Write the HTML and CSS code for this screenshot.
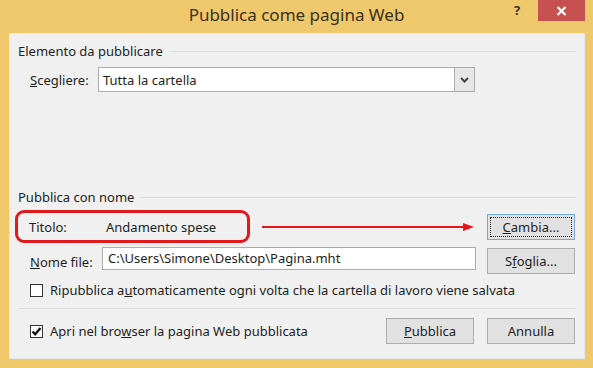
FILE: index.html
```html
<!DOCTYPE html>
<html lang="it">
<head>
    <meta charset="UTF-8">
    <title>Pubblica come pagina Web</title>
    <link rel="stylesheet" href="styles.css">
</head>
<body>
<div class="window">
    <div class="titlebar">
        <span></span>
        <div class="title">Pubblica come pagina Web</div>
        <div class="controls">
            <span class="help">?</span>
            <span class="close">
                <svg width="11" height="10" viewBox="0 0 11 10"><path d="M1.5 1 L9.5 9 M9.5 1 L1.5 9" stroke="#fff" stroke-width="2.2" fill="none"/></svg>
            </span>
        </div>
    </div>
    <div class="client">
        <div class="group-title">Elemento da pubblicare</div>
        <div class="row row-choose">
            <label class="label-choose"><u>S</u>cegliere:</label>
            <div class="combo">
                <span class="combo-text">Tutta la cartella</span>
                <span class="combo-btn">
                    <svg width="9" height="6" viewBox="0 0 9 6"><path d="M1 1 L4.5 4.5 L8 1" stroke="#444" stroke-width="2" fill="none"/></svg>
                </span>
            </div>
        </div>

        <div class="group-title group-second">Pubblica con nome</div>
        <div class="row row-title">
            <div class="highlight">
                <span class="label-title">Titolo:</span>
                <span>Andamento spese</span>
            </div>
            <div class="arrow">
                <span class="arrow-line"></span>
                <span class="arrow-head"></span>
            </div>
            <button class="btn btn-focus" type="button"><span class="focus-rect"><u>C</u>ambia...</span></button>
        </div>
        <div class="row row-file">
            <label class="label-file"><u>N</u>ome file:</label>
            <div class="textbox">C:\Users\Simone\Desktop\Pagina.mht</div>
            <button class="btn btn-browse" type="button">S<u>f</u>oglia...</button>
        </div>
        <div class="row row-check">
            <span class="check"></span>
            <span>Ripubblica a<u>u</u>tomaticamente ogni volta che la cartella di lavoro viene salvata</span>
        </div>
        <div class="separator"></div>
        <div class="row row-bottom">
            <span class="check">
                <svg width="11" height="11" viewBox="0 0 11 11"><path d="M1.5 5.5 L4.2 8.3 L9.5 2" stroke="#111" stroke-width="2.3" fill="none"/></svg>
            </span>
            <span>Apri nel bro<u>w</u>ser la pagina Web pubblicata</span>
            <button class="btn btn-publish" type="button"><u>P</u>ubblica</button>
            <button class="btn" type="button">Annulla</button>
        </div>
    </div>
</div>
</body>
</html>
```

FILE: styles.css
```css
body {
    margin: 0;
    background: #f0c86c;
    font-family: "Noto Sans", "Liberation Sans", sans-serif;
    font-size: 13px;
    color: #1e1e1e;
}
.window {
    width: 593px;
    height: 368px;
    display: flex;
    flex-direction: column;
}
.titlebar {
    height: 33px;
    flex-shrink: 0;
    display: grid;
    grid-template-columns: 1fr auto 1fr;
}
.title {
    font-size: 17px;
    line-height: 30px;
    color: #3a3020;
}
.controls {
    justify-self: end;
    display: flex;
    align-items: flex-start;
    margin-right: 8px;
}
.help {
    width: 20px;
    text-align: center;
    font-weight: bold;
    font-size: 13px;
    line-height: 21px;
    color: #333;
    margin-right: 11px;
}
.close {
    width: 47px;
    height: 21px;
    background: #c75050;
    display: flex;
    align-items: center;
    justify-content: center;
}
.client {
    flex: 1;
    margin: 0 8px 9px 9px;
    background: #f0f0f0;
    border: 1px solid #e6e6e6;
    padding: 9px 8px 0 8px;
}
.group-title {
    display: flex;
    align-items: center;
    height: 16px;
    line-height: 16px;
}
.group-title::after {
    content: "";
    flex: 1;
    height: 1px;
    background: #dcdcdc;
    margin-left: 6px;
}
.group-second {
    margin-top: 97px;
}
.row {
    display: flex;
    align-items: center;
}
.row-choose {
    margin-top: 8px;
    padding-left: 12px;
    height: 25px;
}
.label-choose {
    width: 68px;
}
.combo {
    width: 377px;
    height: 25px;
    box-sizing: border-box;
    border: 1px solid #acacac;
    background: #fff;
    display: flex;
    align-items: center;
}
.combo-text {
    flex: 1;
    padding-left: 4px;
}
.combo-btn {
    width: 21px;
    height: 25px;
    box-sizing: border-box;
    margin: -1px -1px -1px 0;
    border: 1px solid #acacac;
    background: #e6e6e6;
    display: flex;
    align-items: center;
    justify-content: center;
}
.row-title {
    margin-top: 5px;
    margin-left: -3px;
    margin-right: 1px;
}
.highlight {
    width: 235px;
    height: 33px;
    box-sizing: border-box;
    border: 3px solid #e0191e;
    border-radius: 9px;
    padding-left: 11px;
    display: flex;
    align-items: center;
}
.label-title {
    width: 77px;
}
.arrow {
    flex: 1;
    display: flex;
    align-items: center;
    margin: 0 13px 0 12px;
}
.arrow-line {
    flex: 1;
    height: 2px;
    background: #e8141b;
}
.arrow-head {
    width: 0;
    height: 0;
    border-left: 11px solid #e8141b;
    border-top: 4px solid transparent;
    border-bottom: 4px solid transparent;
}
.btn {
    width: 88px;
    height: 26px;
    box-sizing: border-box;
    border: 1px solid #adadad;
    background: #e1e1e1;
    font-family: inherit;
    font-size: 13px;
    color: #1e1e1e;
    padding: 0;
}
.btn-focus {
    border-color: #6fa8dc;
    padding: 2px;
}
.focus-rect {
    display: flex;
    align-items: center;
    justify-content: center;
    height: 100%;
    box-sizing: border-box;
    border: 1px dotted #222;
}
.row-file {
    margin-top: 4px;
    padding-left: 12px;
    margin-right: 1px;
    height: 27px;
}
.label-file {
    width: 72px;
    padding-top: 3px;
}
.textbox {
    align-self: flex-start;
    width: 374px;
    height: 23px;
    box-sizing: border-box;
    border: 1px solid #acacac;
    background: #fff;
    padding-left: 5px;
    line-height: 21px;
}
.btn-browse {
    margin-left: auto;
}
.row-check {
    margin-top: 8px;
    padding-left: 12px;
    height: 16px;
}
.check {
    width: 13px;
    height: 13px;
    box-sizing: border-box;
    border: 1px solid #333;
    background: #fff;
    margin-right: 7px;
    display: flex;
    align-items: center;
    justify-content: center;
}
.separator {
    height: 1px;
    background: #dcdcdc;
    margin-top: 10px;
}
.row-bottom {
    margin-top: 9px;
    padding-left: 12px;
    margin-right: 1px;
}
.btn-publish {
    margin-left: auto;
    margin-right: 13px;
}
```
